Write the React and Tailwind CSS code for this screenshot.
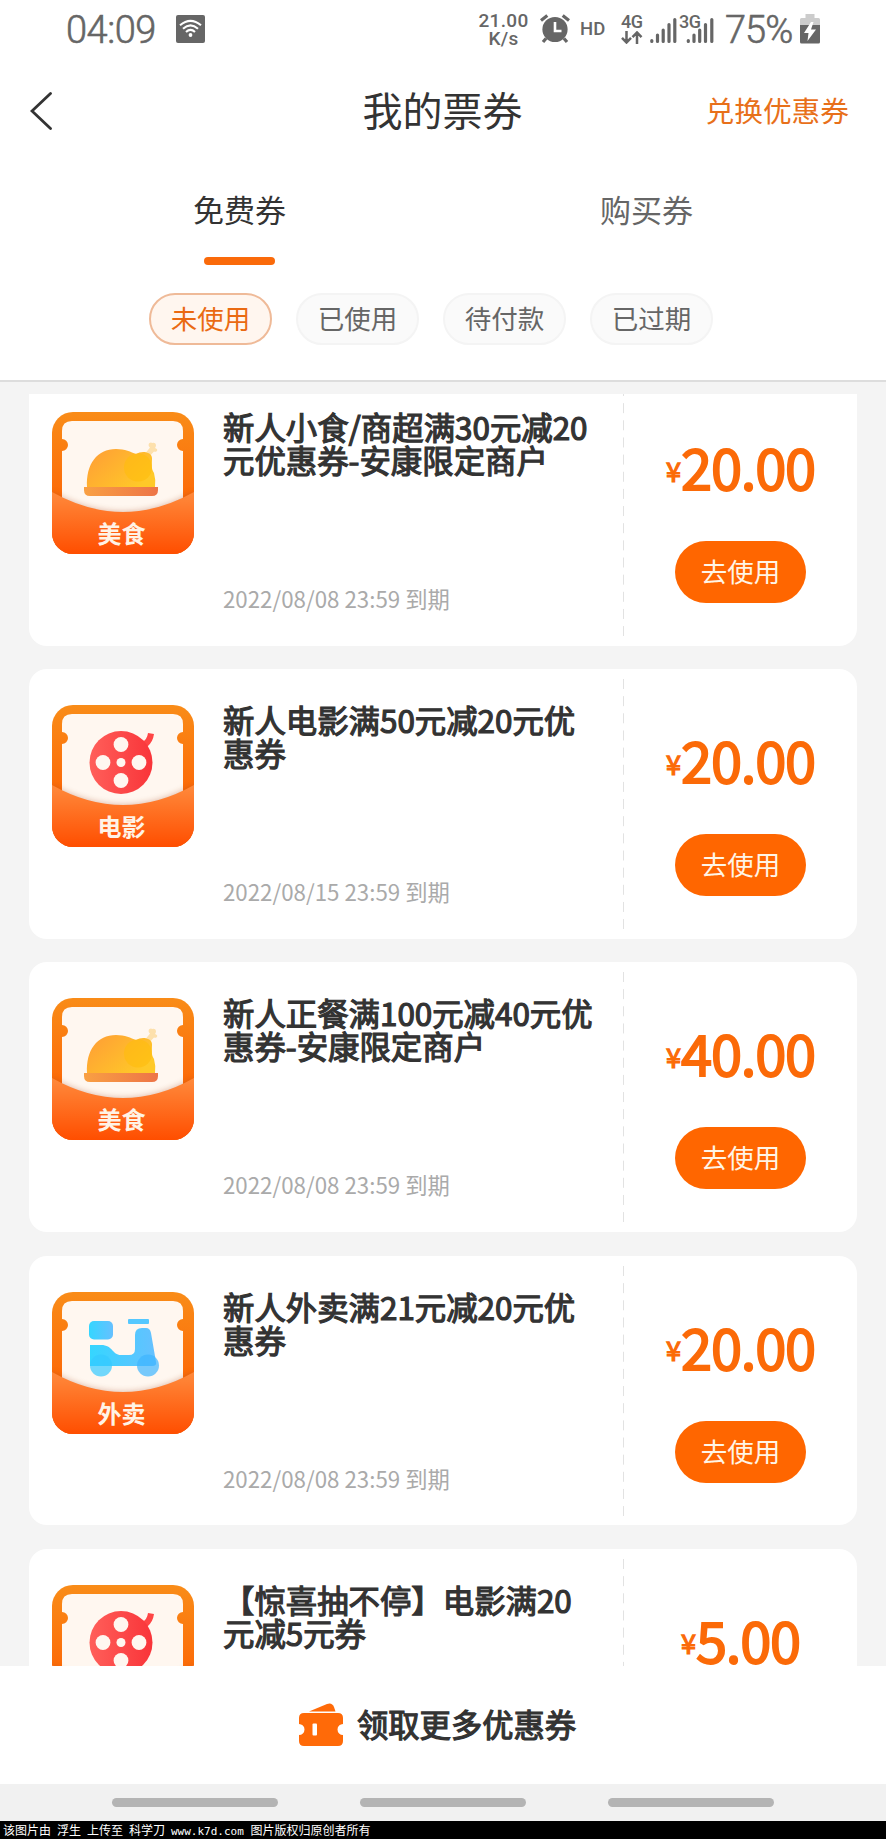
import React from 'react';

const coupons = [
  { type: 'food', title: ['新人小食/商超满30元减20', '元优惠券-安康限定商户'], expires: '2022/08/08 23:59 到期', amount: '20.00' },
  { type: 'movie', title: ['新人电影满50元减20元优', '惠券'], expires: '2022/08/15 23:59 到期', amount: '20.00' },
  { type: 'food', title: ['新人正餐满100元减40元优', '惠券-安康限定商户'], expires: '2022/08/08 23:59 到期', amount: '40.00' },
  { type: 'takeout', title: ['新人外卖满21元减20元优', '惠券'], expires: '2022/08/08 23:59 到期', amount: '20.00' },
  { type: 'movie', title: ['【惊喜抽不停】电影满20', '元减5元券'], expires: '2022/08/15 23:59 到期', amount: '5.00' },
];

const labels = { food: '美食', movie: '电影', takeout: '外卖' };

const filters = ['未使用', '已使用', '待付款', '已过期'];

const StatusBar = () => (
  <div className="flex h-[50px] shrink-0 items-start pl-[66px] text-[#666] font-['Roboto',sans-serif]">
    <span className="mt-[8px] w-[110px] text-[38px] leading-[44px] font-light tracking-[-0.5px] [-webkit-text-stroke:0.6px_#666]">04:09</span>
    <svg className="mt-[15px] h-7 w-[29px]" viewBox="0 0 29 28" fill="none">
      <rect width="29" height="28" rx="2" fill="#666" />
      <g stroke="#fff" strokeWidth="2.1">
        <path d="M4 10.3Q14.5 1.5 25 10.3" />
        <path d="M7 13.8Q14.5 7 22 13.8" />
        <path d="M10 17Q14.5 12.8 19 17" />
      </g>
      <circle cx="14.5" cy="20" r="1.9" fill="#fff" />
    </svg>
    <div className="mt-[12px] ml-[272px] w-[53px] text-center text-[19px] leading-[18px] font-medium tracking-[0.3px]">
      <div>21.00</div>
      <div>K/s</div>
    </div>
    <svg className="mt-[14px] ml-[9px] h-[30px] w-[32px]" viewBox="0 0 32 30">
      <circle cx="16" cy="15.5" r="12.6" fill="#666" />
      <path d="M2 6.5L8.3 1.5M30 6.5L23.7 1.5M7 24.5L4 28M25 24.5L28 28" stroke="#666" strokeWidth="3.2" fill="none" />
      <path d="M16 8v9h6.5" stroke="#fff" strokeWidth="2.6" fill="none" />
    </svg>
    <span className="mt-[18px] ml-[9px] w-[41px] text-[18.5px] leading-[22px] font-medium">HD</span>
    <div className="mt-[12px] w-[29px]">
      <div className="text-[18px] leading-[19px] font-medium tracking-[-0.5px]">4G</div>
      <svg className="h-[13px] w-[22px]" viewBox="0 0 22 13" fill="none" stroke="#666" strokeWidth="2.5">
        <path d="M5.5 0v11M1 6.8L5.5 11.5L10 6.8M16 13V2M11.5 6.2L16 1.5L20.5 6.2" />
      </svg>
    </div>
    <svg className="mt-[17px] h-[27px] w-[27px]" viewBox="0 0 27 27" stroke="#666" strokeWidth="3.2" strokeLinecap="round">
      <path d="M1.8 23.5v1M7.5 18v6.5M13.2 13v11.5M19 7.5v17M24.8 2.5v22" />
    </svg>
    <div className="relative ml-[2px] h-11 w-[35px]">
      <svg className="mt-[17px] ml-[7px] h-[27px] w-[28px]" viewBox="0 0 28 27" stroke="#666" strokeWidth="3.2" strokeLinecap="round">
        <path d="M2.3 23.5v1M8 18v6.5M13.7 13v11.5M19.5 7.5v17M25.8 2.5v22" />
      </svg>
      <span className="absolute top-[12px] left-0 text-[18px] leading-[19px] font-medium tracking-[-0.5px]">3G</span>
    </div>
    <span className="mt-[8px] ml-[11px] w-[75px] text-[38px] leading-[44px] font-light tracking-[-1px] [-webkit-text-stroke:0.6px_#666]">75%</span>
    <svg className="mt-[14px] h-[30px] w-5" viewBox="0 0 20 30">
      <path d="M5.5 0h9v4h4a1.5 1.5 0 0 1 1.5 1.5V12H0V5.5A1.5 1.5 0 0 1 1.5 4h4z" fill="#ccc" />
      <path d="M0 11h20v17a1.5 1.5 0 0 1-1.5 1.5h-17A1.5 1.5 0 0 1 0 28z" fill="#666" />
      <path d="M11 8L4 19h4.5L7.5 27L16 15.5h-5L13.5 8z" fill="#fff" />
    </svg>
  </div>
);

const FoodArt = () => (
  <g>
    <path d="M92 43L98 35.5C95 33 97.5 29 100.5 31C104 30 105 34 103 36C107 37 105 41 102 39.5L96 46z" fill="#fde0ac" />
    <path d="M35 75C34 52 45 37 64 37C73 37 79 40 84 42C90 38 100 40 100 46C100 54 99 56 102 61Q104 68 103 75z" fill="url(#chicken)" />
    <circle cx="86" cy="55.5" r="14" fill="#ffbc0c" opacity=".6" />
    <path d="M32 75h74v3q0 6-6 6H38q-6 0-6-6z" fill="url(#plate)" />
  </g>
);

const MovieArt = () => (
  <g>
    <path d="M90 37Q95 35 96 28L102 29Q101 37 95 42z" fill="#ff4545" />
    <circle cx="69" cy="57.5" r="31.5" fill="url(#reel)" />
    <g fill="#fff7f0">
      <circle cx="69" cy="39.5" r="7.4" />
      <circle cx="69" cy="75.5" r="7.4" />
      <circle cx="51" cy="57.5" r="7.4" />
      <circle cx="87" cy="57.5" r="7.4" />
      <circle cx="69" cy="57.5" r="4.5" />
    </g>
  </g>
);

const TakeoutArt = () => (
  <g>
    <rect x="37" y="29" width="24" height="18.5" rx="5" fill="url(#scooter)" />
    <rect x="76" y="27" width="21" height="5" rx="1" fill="#55c8ff" />
    <path d="M38 53H49C61 53 60 63 69 63H77Q83 63 83 57V43Q83 36 90 36H94Q98 36 99 41L104 70Q105 74 100 74H38z" fill="url(#scooter)" />
    <circle cx="49" cy="73.5" r="11" fill="#35c9ff" opacity=".7" />
    <circle cx="96" cy="73.5" r="11" fill="#3db5ff" opacity=".7" />
  </g>
);

const CouponIcon = ({ type }) => (
  <svg className="h-[142px] w-[142px] shrink-0" viewBox="0 0 142 142">
    <defs>
      <linearGradient id="frame" x1="0" y1="0" x2="0" y2="1">
        <stop offset="0" stopColor="#f98c18" />
        <stop offset=".6" stopColor="#fc6a08" />
      </linearGradient>
      <linearGradient id="pocket" x1="0" y1="0" x2="0" y2="1">
        <stop offset="0" stopColor="#ff8a3c" />
        <stop offset="1" stopColor="#ff4e00" />
      </linearGradient>
      <linearGradient id="chicken" x1="0" y1="0" x2="1" y2=".6">
        <stop offset="0" stopColor="#ff9c36" />
        <stop offset="1" stopColor="#ffc928" />
      </linearGradient>
      <linearGradient id="plate">
        <stop offset="0" stopColor="#f9a043" />
        <stop offset="1" stopColor="#ed7447" />
      </linearGradient>
      <linearGradient id="reel">
        <stop offset="0" stopColor="#ff5f5a" />
        <stop offset="1" stopColor="#f93439" />
      </linearGradient>
      <linearGradient id="scooter">
        <stop offset="0" stopColor="#35d6ff" />
        <stop offset="1" stopColor="#66c0ff" />
      </linearGradient>
      <clipPath id="tile">
        <rect width="142" height="142" rx="21" />
      </clipPath>
      <filter id="soft" x="-20%" y="-20%" width="140%" height="140%">
        <feGaussianBlur stdDeviation="3" />
      </filter>
    </defs>
    <g clipPath="url(#tile)">
      <rect width="142" height="142" fill="url(#frame)" />
      <path d="M20 9H121Q131 9 131 19V27A6 6 0 0 0 131 39V110H10V39A6 6 0 0 0 10 27V19Q10 9 20 9Z" fill="#fff7f0" />
      {type === 'food' && <FoodArt />}
      {type === 'movie' && <MovieArt />}
      {type === 'takeout' && <TakeoutArt />}
      <path d="M0 80Q71 120 142 80V142H0z" fill="#a34a20" opacity=".4" filter="url(#soft)" />
      <path d="M0 80Q71 120 142 80V142H0z" fill="url(#pocket)" />
    </g>
    <text x="69.5" y="131" textAnchor="middle" fill="#fff3e6" className="text-[24px] font-bold font-['Noto_Sans_CJK_SC',sans-serif]">{labels[type]}</text>
  </svg>
);

const CouponCard = ({ coupon }) => (
  <div className="flex h-[269.7px] shrink-0 rounded-[18px] bg-white">
    <div className="flex w-[594px] pt-[36px] pl-[23px]">
      <CouponIcon type={coupon.type} />
      <div className="-mt-[2px] flex h-[202px] flex-col justify-between pl-[29px] whitespace-nowrap">
        <div className="text-[31.4px] leading-[33px] text-[#333] [-webkit-text-stroke:1.2px_#333]">
          {coupon.title.map((line) => (
            <div key={line}>{line}</div>
          ))}
        </div>
        <div className="text-[22.3px] leading-[28px] text-[#aaa]">{coupon.expires}</div>
      </div>
    </div>
    <svg className="mt-[10px] h-[250px] w-px" viewBox="0 0 1 250">
      <path d="M.5 0V250" stroke="#e2e2e2" strokeWidth="1" strokeDasharray="10 7.15" />
    </svg>
    <div className="flex flex-1 flex-col items-center pt-[60px]">
      <div className="flex h-[60px] items-center leading-[60px] text-[#fb6a08]">
        <span className="pt-[9px] text-[27px] [-webkit-text-stroke:1.2px_#fb6a08]">¥</span>
        <span className="text-[56px] tracking-[-1.2px] [-webkit-text-stroke:1.8px_#fb6a08]">{coupon.amount}</span>
      </div>
      <button className="mt-[45px] h-[62px] w-[131px] rounded-full bg-[#ff6600] text-[26.5px] leading-[60px] text-[#fff5e6]">
        <span className="block pb-[2px] leading-[58px]">去使用</span>
      </button>
    </div>
  </div>
);

const App = () => {
  return (
    <div className="flex h-[1839px] w-[886px] flex-col overflow-hidden bg-[#f4f4f4] font-['Noto_Sans_CJK_SC',sans-serif] text-[#333]">
      <div className="flex h-[382px] shrink-0 flex-col border-b-2 border-[#ddd] bg-white">
        <StatusBar />

        <div className="grid h-[122px] grid-cols-3 items-center pr-[37px] pl-[30px]">
          <svg className="h-[38px] w-[23px]" viewBox="0 0 23 38" fill="none" stroke="#333" strokeWidth="2.8" strokeLinecap="round">
            <path d="M20.5 1.5L2 19L20.5 36.5" />
          </svg>
          <h1 className="pb-[4px] pl-[6px] text-center text-[40px] leading-[48px]">我的票券</h1>
          <span className="pb-[3px] text-right text-[28.7px] text-[#e8701a]">兑换优惠券</span>
        </div>

        <div className="grid h-[93px] grid-cols-2 px-[36px] text-center text-[31px] leading-[44px]">
          <div className="flex flex-col items-center pt-[15px]">
            <span>免费券</span>
            <span className="mt-[26px] h-2 w-[71px] rounded-full bg-[#fa6a0a]" />
          </div>
          <div className="pt-[15px] text-[#666]">购买券</div>
        </div>

        <div className="flex gap-[24px] pt-[28px] pl-[149px]">
          {filters.map((name, i) => (
            <button
              key={name}
              className={
                i === 0
                  ? 'h-[52px] w-[123px] rounded-full border-2 border-[#efba98] bg-[#fff6ef] text-[26.5px] leading-[43px] text-[#ea6a12]'
                  : 'h-[52px] w-[123px] rounded-full border-2 border-[#f4f4f4] bg-[#fafafa] text-[26.5px] leading-[43px] text-[#666]'
              }
            >
              <span className="block pb-[3px]">{name}</span>
            </button>
          ))}
        </div>
      </div>

      <div className="mt-3 flex h-[1272px] shrink-0 flex-col overflow-hidden px-[29px]">
        <div className="mt-[-18px] flex flex-col gap-[23.5px]">
          {coupons.map((coupon, i) => (
            <CouponCard key={i} coupon={coupon} />
          ))}
        </div>
      </div>

      <div className="flex h-[118px] shrink-0 items-center bg-white pl-[298px]">
        <svg className="h-[44px] w-[46px]" viewBox="0 0 46 44" fill="#ff6a08">
          <path d="M11 8.5L29 1Q34 -1 36 4L37.5 8.5z" />
          <path d="M6 10H40Q45 10 45 15V21A5.5 5.5 0 0 0 45 32V38Q45 43 40 43H6Q1 43 1 38V32A5.5 5.5 0 0 0 1 21V15Q1 10 6 10Z" />
          <rect x="14.5" y="20.5" width="4.5" height="12" rx="1" fill="#fff" />
        </svg>
        <span className="ml-[13px] pb-[2px] text-[31.3px] leading-[40px] [-webkit-text-stroke:1.2px_#333]">领取更多优惠券</span>
      </div>

      <div className="flex h-[37px] shrink-0 items-start gap-[82px] bg-[#f1f1f1] pt-[14px] pl-[112px]">
        <span className="h-[9px] w-[166px] rounded-full bg-[#b4b4b4]" />
        <span className="h-[9px] w-[166px] rounded-full bg-[#b4b4b4]" />
        <span className="h-[9px] w-[166px] rounded-full bg-[#b4b4b4]" />
      </div>

      <div className="h-[18px] shrink-0 bg-black pl-[3px] text-[12px] leading-[17px] [word-spacing:3.3px] whitespace-pre text-white">
        该图片由 浮生 上传至 科学刀 <span className="text-[11px] [word-spacing:0px] font-['DejaVu_Sans_Mono',monospace]">www.k7d.com </span>图片版权归原创者所有
      </div>
    </div>
  );
};

export default App;
